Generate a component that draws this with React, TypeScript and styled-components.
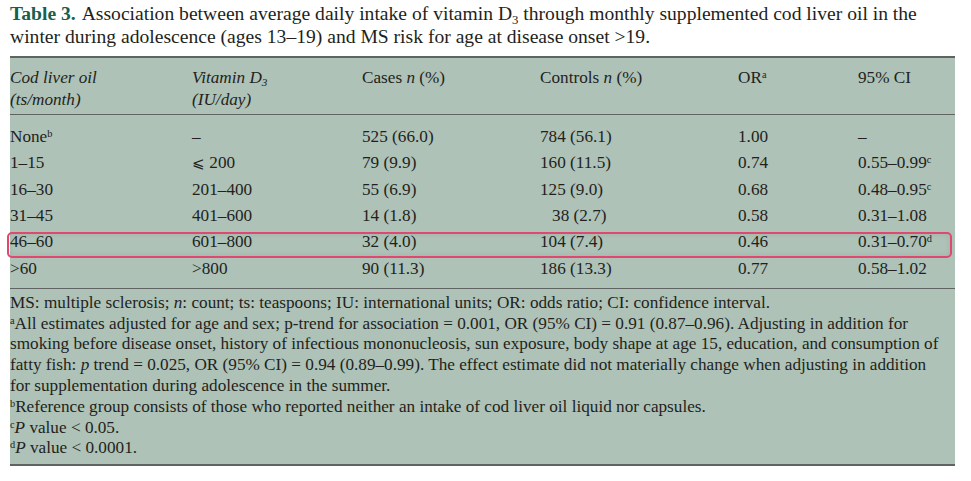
import React from 'react';
import styled, { createGlobalStyle } from 'styled-components';

const GlobalStyle = createGlobalStyle`
	html, body {
		margin: 0;
		padding: 0;
		background: #ffffff;
	}
	body {
		font-family: 'Liberation Serif', 'Times New Roman', serif;
		color: #231f20;
	}
`;

const Page = styled.div`
	width: 971px;
	height: 481px;
	padding: 2px 0 0 10px;
	box-sizing: border-box;
`;

const Caption = styled.p`
	margin: 0;
	width: 955px;
	font-size: 19.6px;
	line-height: 23px;
	white-space: nowrap;
`;

const CaptionLabel = styled.span`
	font-weight: bold;
	color: #17604f;
	margin-right: 6px;
`;

const Panel = styled.div`
	margin-top: 8px;
	width: 945px;
	background: #aec2b7;
	border-top: 2px solid #5f6462;
	border-bottom: 2px solid #5f6462;
	font-size: 17.2px;
`;

const Grid = styled.div`
	display: grid;
	grid-template-columns: 182px 170px 178px 198px 120px 1fr;
`;

const HeadRow = styled(Grid)`
	padding: 9px 0 3px;
	line-height: 22px;
	border-bottom: 1.5px solid #5f6462;
`;

const Body = styled.div`
	padding: 9px 0 6px;
	border-bottom: 1.5px solid #5f6462;
`;

const Row = styled(Grid)<{ $marked?: boolean }>`
	position: relative;
	height: 26.3px;
	align-items: center;
	line-height: 26px;
	${({ $marked }) =>
		$marked &&
		`
		&::after {
			content: '';
			position: absolute;
			left: -3px;
			right: 3px;
			top: 3px;
			bottom: -3px;
			border: 2px solid #e0486f;
			border-radius: 5px;
			box-shadow: inset 0 0 6px rgba(0, 0, 0, 0.08);
			pointer-events: none;
		}
	`}
`;

const Cell = styled.div`
	white-space: pre;
`;

const HeadCell = styled.div<{ $italic?: boolean }>`
	font-style: ${({ $italic }) => ($italic ? 'italic' : 'normal')};
`;

const Sup = styled.sup`
	font-size: 60%;
	vertical-align: 0.5em;
	line-height: 0;
`;

const Sub = styled.sub`
	font-size: 65%;
	vertical-align: -0.3em;
	line-height: 0;
`;

const Notes = styled.div`
	padding: 4px 0 5px;
	line-height: 20.8px;
	width: 935px;
`;

const Note = styled.p`
	margin: 0;
`;

const LessEq = styled.span`
	font-family: 'DejaVu Serif', serif;
	font-size: 15px;
`;

type DataRow = {
	oil: string;
	vit: React.ReactNode;
	cases: string;
	controls: string;
	or: string;
	ci: React.ReactNode;
	marked?: boolean;
};

const rows: DataRow[] = [
	{ oil: 'None', vit: '–', cases: '525 (66.0)', controls: '784 (56.1)', or: '1.00', ci: '–' },
	{
		oil: '1–15',
		vit: (
			<>
				<LessEq>⩽</LessEq> 200
			</>
		),
		cases: '79 (9.9)',
		controls: '160 (11.5)',
		or: '0.74',
		ci: (
			<>
				0.55–0.99<Sup>c</Sup>
			</>
		)
	},
	{
		oil: '16–30',
		vit: '201–400',
		cases: '55 (6.9)',
		controls: '125 (9.0)',
		or: '0.68',
		ci: (
			<>
				0.48–0.95<Sup>c</Sup>
			</>
		)
	},
	{ oil: '31–45', vit: '401–600', cases: '14 (1.8)', controls: '\u2007\u200938 (2.7)', or: '0.58', ci: '0.31–1.08' },
	{
		oil: '46–60',
		vit: '601–800',
		cases: '32 (4.0)',
		controls: '104 (7.4)',
		or: '0.46',
		ci: (
			<>
				0.31–0.70<Sup>d</Sup>
			</>
		),
		marked: true
	},
	{ oil: '>60', vit: '>800', cases: '90 (11.3)', controls: '186 (13.3)', or: '0.77', ci: '0.58–1.02' }
];

export default function App() {
	return (
		<Page>
			<GlobalStyle />
			<Caption>
				<CaptionLabel>Table 3.</CaptionLabel>
				Association between average daily intake of vitamin D<Sub>3</Sub> through monthly supplemented cod
				liver oil in the
				<br />
				winter during adolescence (ages 13–19) and MS risk for age at disease onset &gt;19.
			</Caption>
			<Panel>
				<HeadRow>
					<HeadCell $italic>
						Cod liver oil
						<br />
						(ts/month)
					</HeadCell>
					<HeadCell $italic>
						Vitamin D<Sub>3</Sub>
						<br />
						(IU/day)
					</HeadCell>
					<HeadCell>
						Cases <i>n</i> (%)
					</HeadCell>
					<HeadCell>
						Controls <i>n</i> (%)
					</HeadCell>
					<HeadCell>
						OR<Sup>a</Sup>
					</HeadCell>
					<HeadCell>95% CI</HeadCell>
				</HeadRow>
				<Body>
					{rows.map((r, i) => (
						<Row key={r.oil} $marked={r.marked}>
							<Cell>
								{r.oil}
								{i === 0 && <Sup>b</Sup>}
							</Cell>
							<Cell>{r.vit}</Cell>
							<Cell>{r.cases}</Cell>
							<Cell>{r.controls}</Cell>
							<Cell>{r.or}</Cell>
							<Cell>{r.ci}</Cell>
						</Row>
					))}
				</Body>
				<Notes>
					<Note>
						MS: multiple sclerosis; <i>n</i>: count; ts: teaspoons; IU: international units; OR: odds ratio; CI:
						confidence interval.
					</Note>
					<Note>
						<Sup>a</Sup>All estimates adjusted for age and sex; p-trend for association = 0.001, OR (95% CI) = 0.91
						(0.87–0.96). Adjusting in addition for
						<br />
						smoking before disease onset, history of infectious mononucleosis, sun exposure, body shape at age 15,
						education, and consumption of
						<br />
						fatty fish: <i>p</i> trend = 0.025, OR (95% CI) = 0.94 (0.89–0.99). The effect estimate did not
						materially change when adjusting in addition
						<br />
						for supplementation during adolescence in the summer.
					</Note>
					<Note>
						<Sup>b</Sup>Reference group consists of those who reported neither an intake of cod liver oil liquid nor
						capsules.
					</Note>
					<Note>
						<Sup>c</Sup>
						<i>P</i> value &lt; 0.05.
					</Note>
					<Note>
						<Sup>d</Sup>
						<i>P</i> value &lt; 0.0001.
					</Note>
				</Notes>
			</Panel>
		</Page>
	);
}
